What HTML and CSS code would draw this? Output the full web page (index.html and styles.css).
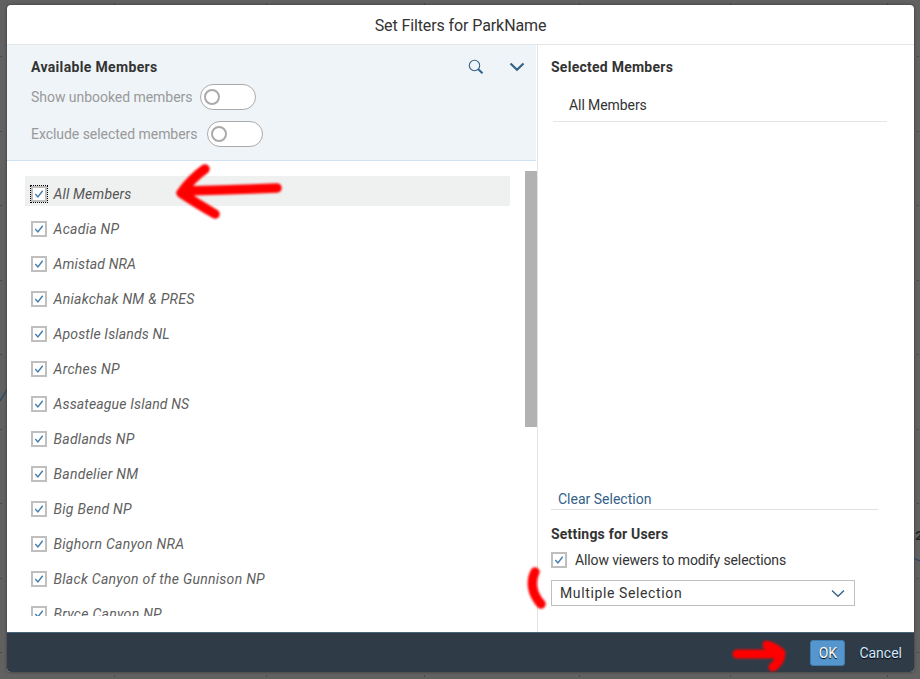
FILE: index.html
```html
<!DOCTYPE html>
<html lang="en">
<head>
<meta charset="utf-8">
<title>Set Filters for ParkName</title>
<link rel="stylesheet" href="styles.css">
</head>
<body>
<svg class="backdrop" width="920" height="679" viewBox="0 0 920 679">
  <path d="M114.500 3v2M266.500 3v2M424.500 3v2M579.500 3v2M730.500 3v2M887.500 3v2M114.500 675v2M266.500 675v2M424.500 675v2M579.500 675v2M730.500 675v2M887.500 675v2M0 56.500h2M0 131.500h2M0 205.500h2M0 280.500h2M0 354.500h2M0 429.500h2M0 503.500h2M0 578.500h2M0 652.500h2M917 56.500h2M917 131.500h2M917 205.500h2M917 280.500h2M917 354.500h2M917 429.500h2M917 503.500h2M917 578.500h2M917 652.500h2" stroke="#484848"/>
  <path d="M0 401L8 388M913 558L920 561" stroke="#2c4766" stroke-width="1.300" fill="none"/>
  <text x="911.500" y="540" class="chart-label">.2</text>
</svg>
<svg class="symbols">
  <symbol id="check" viewBox="0 0 10 10"><path d="M1.300 5.100L3.900 7.900L8.700 1.700" fill="none" stroke="#427cac" stroke-width="1.400"/></symbol>
</svg>
<main class="dialog">
  <header class="title"><span>Set Filters for ParkName</span></header>
  <div class="content">
    <section class="available">
      <div class="tools">
        <div class="tools-head">
          <h2 class="h-available">Available Members</h2>
          <svg class="search" width="16" height="16" viewBox="0 0 16 16"><circle cx="6.500" cy="6.500" r="5.200" fill="none" stroke="#346187" stroke-width="1.100"/><path d="M10.300 10.300L14.500 14.300" stroke="#346187" stroke-width="2"/></svg>
          <svg class="expand" width="16" height="10" viewBox="0 0 16 10"><path d="M1.500 1.500L8 7.700L14.500 1.500" fill="none" stroke="#346187" stroke-width="2.200"/></svg>
        </div>
        <div class="option unbooked"><span>Show unbooked members</span><i class="switch"></i></div>
        <div class="option exclude"><span>Exclude selected members</span><i class="switch"></i></div>
      </div>
      <div class="list-area">
        <ul class="list">
          <li class="active narrow"><i class="box focus"><svg><use href="#check"/></svg></i><span>All Members</span></li>
          <li><i class="box"><svg><use href="#check"/></svg></i><span>Acadia NP</span></li>
          <li class="narrow"><i class="box"><svg><use href="#check"/></svg></i><span>Amistad NRA</span></li>
          <li><i class="box"><svg><use href="#check"/></svg></i><span>Aniakchak NM &amp; PRES</span></li>
          <li class="narrow"><i class="box"><svg><use href="#check"/></svg></i><span>Apostle Islands NL</span></li>
          <li><i class="box"><svg><use href="#check"/></svg></i><span>Arches NP</span></li>
          <li class="narrow"><i class="box"><svg><use href="#check"/></svg></i><span>Assateague Island NS</span></li>
          <li><i class="box"><svg><use href="#check"/></svg></i><span>Badlands NP</span></li>
          <li><i class="box"><svg><use href="#check"/></svg></i><span>Bandelier NM</span></li>
          <li><i class="box"><svg><use href="#check"/></svg></i><span>Big Bend NP</span></li>
          <li><i class="box"><svg><use href="#check"/></svg></i><span>Bighorn Canyon NRA</span></li>
          <li><i class="box"><svg><use href="#check"/></svg></i><span>Black Canyon of the Gunnison NP</span></li>
          <li><i class="box"><svg><use href="#check"/></svg></i><span>Bryce Canyon NP</span></li>
        </ul>
        <div class="scrollbar"></div>
      </div>
    </section>
    <section class="selected">
      <h2 class="h-selected">Selected Members</h2>
      <div class="chosen"><span>All Members</span></div>
      <div class="clear"><span>Clear Selection</span></div>
      <h2 class="h-settings">Settings for Users</h2>
      <label class="allow"><i class="box"><svg><use href="#check"/></svg></i><span>Allow viewers to modify selections</span></label>
      <div class="select"><span>Multiple Selection</span><svg width="14" height="9" viewBox="0 0 14 9"><path d="M1 1.500L7 7.300L13 1.500" fill="none" stroke="#346187" stroke-width="1.300"/></svg></div>
    </section>
  </div>
  <footer class="footer"><button class="ok"><span>OK</span></button><button class="cancel"><span>Cancel</span></button></footer>
</main>
<svg class="marks" width="920" height="679" viewBox="0 0 920 679">
  <g fill="none" stroke="#f00" stroke-linecap="round" stroke-linejoin="round">
    <path d="M205 169Q192 178 181 193Q196 203 215 214M184 191Q230 190 277 188" stroke-width="9.500"/>
    <path d="M535 572C530 582 532 594 541 604" stroke-width="9.500"/>
    <path d="M737 654H779M767 645Q776 648 781 653Q781 661 773 667" stroke-width="9"/>
  </g>
</svg>
</body>
</html>
```
FILE: styles.css
```css
*, *::before { box-sizing: border-box; }
body { margin: 0; width: 920px; height: 679px; overflow: hidden; background: #616161; font: 14px/20px Roboto, "Liberation Sans", sans-serif; color: #333; padding: 5px 6px 7px 7px; }
h2, ul { margin: 0; padding: 0; }
h2 { font-size: 14px; font-weight: 700; line-height: 20px; }
.backdrop, .marks { position: absolute; left: 0; top: 0; pointer-events: none; }
.marks { filter: blur(.8px); }
.symbols { position: absolute; width: 0; height: 0; }
.chart-label { font: bold 13px Roboto, sans-serif; fill: #222; }
.dialog { position: relative; width: 907px; height: 667px; display: flex; flex-direction: column; background: #fff; border-radius: 4px; overflow: hidden; box-shadow: 0 0 3px #333; }
.title { height: 40px; border-bottom: 1px solid #e5e5e5; text-align: center; font-size: 16px; line-height: 41px; letter-spacing: -.1px; }
.content { flex: 1; display: flex; min-height: 0; }
.available { width: 531px; border-right: 1px solid #e5e5e5; }
.tools { width: 529px; height: 116px; background: #eff4f8; border-bottom: 1px solid #d0e1f1; padding: 12px 11px 0 24px; }
.tools-head { display: flex; align-items: center; height: 20px; }
.tools-head h2 { flex: 1; }
.h-available { letter-spacing: .34px; }
.h-selected { letter-spacing: .25px; }
.search { margin-right: 25px; }
.option { display: flex; align-items: center; height: 26px; color: #999; letter-spacing: -.04px; }
.unbooked { margin-top: 7px; }
.unbooked span { width: 169px; }
.exclude { margin-top: 11px; }
.exclude span { width: 176px; }
.switch { width: 56px; height: 26px; border: 1px solid #aaa; border-radius: 13px; background: #fff; padding: 4px 3px; display: flex; }
.switch::before { content: ""; width: 16px; height: 16px; border: 2px solid #aaa; border-radius: 50%; }
.list-area { display: flex; height: 455px; padding: 10px 0 0 18px; }
.list { width: 485px; margin: 5px 15px 0 0; list-style: none; height: 440px; overflow: hidden; }
.list li { display: flex; align-items: center; height: 30px; margin-bottom: 5px; padding: 5px 0 0 6px; gap: 6.5px; font-style: italic; color: #606060; letter-spacing: .28px; }
.list .narrow { letter-spacing: .15px; }
.list .active { background: #eff1f1; color: #555; }
.box { width: 16px; height: 16px; flex: none; border: 2px solid #bfbfbf; background: #fff; display: flex; align-items: center; justify-content: center; }
.box svg { width: 10px; height: 10px; }
.focus { outline: 1px dotted #000; }
.scrollbar { width: 12px; height: 256px; background: #b2b2b2; }
.selected { flex: 1; padding: 12px 27px 0 13px; }
.chosen { margin: 9px 0 0 2px; height: 36px; padding: 9px 0 0 16px; border-bottom: 1px solid #e5e5e5; letter-spacing: -.08px; }
.clear { margin-top: 367px; width: 327px; height: 21px; padding-left: 7px; border-bottom: 1px solid #e0e0e0; color: #346187; }
.h-settings { margin-top: 14px; letter-spacing: .2px; }
.allow { display: flex; align-items: center; height: 20px; margin-top: 6px; gap: 8px; letter-spacing: -.12px; }
.select { display: flex; align-items: center; justify-content: space-between; width: 304px; height: 26px; margin-top: 10px; padding: 0 9px 0 8px; border: 1px solid #bfbfbf; letter-spacing: .62px; }
.footer { height: 40px; background: #2f3c48; border-top: 1px solid #47637a; display: flex; align-items: center; justify-content: flex-end; padding-right: 12px; gap: 14px; }
button { font: inherit; padding: 0; border: 0; background: none; color: #d1e8ff; text-shadow: 0 1px 1px #000; }
.ok { width: 35px; height: 26px; background: #5496cd; border: 1px solid #427cac; border-radius: 3px; color: #fff; }
```
